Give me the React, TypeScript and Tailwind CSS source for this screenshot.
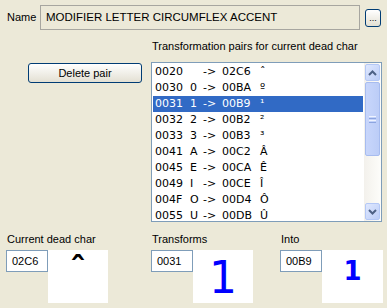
import React from "react";

const rows: [string, string, string, string][] = [
  ["0020", "", "02C6", "ˆ"],
  ["0030", "0", "00BA", "º"],
  ["0031", "1", "00B9", "¹"],
  ["0032", "2", "00B2", "²"],
  ["0033", "3", "00B3", "³"],
  ["0041", "A", "00C2", "Â"],
  ["0045", "E", "00CA", "Ê"],
  ["0049", "I", "00CE", "Î"],
  ["004F", "O", "00D4", "Ô"],
  ["0055", "U", "00DB", "Û"],
];

const sans = { fontFamily: '"Liberation Sans", Arial, sans-serif' };

function Chevron({ up }: { up: boolean }) {
  return (
    <svg width="9" height="6" viewBox="0 0 9 6">
      <path
        d={up ? "M1 5 L4.5 1.5 L8 5" : "M1 1 L4.5 4.5 L8 1"}
        fill="none"
        stroke="#4d6185"
        strokeWidth="2"
      />
    </svg>
  );
}

function Field({ value, boxW, boxContent }: { value: string; boxW: string; boxContent: React.ReactNode }) {
  return (
    <div className="flex items-start">
      <div className="w-[42px] h-[22px] border border-[#7f9db9] bg-white flex items-center pl-[5px] text-[11px] text-black">
        {value}
      </div>
      <div className={`${boxW} h-[53px] bg-white flex justify-center`}>{boxContent}</div>
    </div>
  );
}

export default function App() {
  return (
    <div className="w-[387px] h-[308px] bg-[#ece9d8] overflow-hidden text-black" style={sans}>
      {/* Row 1 */}
      <div className="flex items-center pt-[5px]">
        <div className="pl-[7px] w-[40px] text-[11px]">Name</div>
        <div className="w-[320px] h-[25px] border border-[#a7a6a0] bg-[#ece9d8] flex items-center pl-[5px] text-[11.5px]">
          MODIFIER LETTER CIRCUMFLEX ACCENT
        </div>
        <div className="ml-[5px] w-[16px] h-[18px] border border-[#003c74] rounded-[3px] bg-linear-to-b from-white to-[#e3e0d3] flex items-end justify-center pb-[3px] text-[9px] leading-none">
          ...
        </div>
      </div>

      {/* Row 2 */}
      <div className="mt-[10px] pl-[152px] text-[11px] leading-[13px]">
        Transformation pairs for current dead char
      </div>

      {/* Row 3 */}
      <div className="flex mt-[9px]">
        <div className="ml-[28px] mt-[1px] w-[114px] h-[20px] border border-[#003c74] rounded-[3px] bg-linear-to-b from-white to-[#e3e0d3] flex items-center justify-center text-[11px]">
          Delete pair
        </div>
        <div className="ml-[9px] w-[231px] h-[160px] border border-[#7f9db9] bg-white flex">
          <div className="flex-1 p-[1px] overflow-hidden" style={{ fontFamily: '"DejaVu Sans", Verdana, sans-serif' }}>
            {rows.map((r, i) => (
              <div
                key={r[0]}
                className={`flex h-[16px] items-center pl-[2px] text-[11px] whitespace-pre ${
                  i === 2 ? "bg-[#316ac5] text-white" : "text-black"
                }`}
              >
                <span className="w-[35px]">{r[0]}</span>
                <span className="w-[13px]">{r[1]}</span>
                <span className="w-[19px]">-&gt;</span>
                <span className="w-[38px]">{r[2]}</span>
                <span>{r[3]}</span>
              </div>
            ))}
          </div>
          <div className="w-[17px] h-full flex flex-col bg-linear-to-r from-[#f3f1ec] to-[#fdfdfa]">
            <div className="h-[17px] mx-[1px] mt-[1px] border border-[#b4c8f6] rounded-[2px] bg-linear-to-br from-[#dfe8fe] to-[#bccdf7] flex items-center justify-center">
              <Chevron up />
            </div>
            <div className="h-[74px] mx-[1px] mt-[1px] border border-[#a7bcef] rounded-[2px] bg-linear-to-r from-[#c8d6fb] to-[#bccdf7] flex flex-col items-center justify-center gap-[1px]">
              <div className="w-[7px] h-[1px] bg-[#eef3fe]" />
              <div className="w-[7px] h-[1px] bg-[#8ca5e0]" />
              <div className="w-[7px] h-[1px] bg-[#eef3fe]" />
              <div className="w-[7px] h-[1px] bg-[#8ca5e0]" />
            </div>
            <div className="flex-1" />
            <div className="h-[17px] mx-[1px] mb-[1px] border border-[#b4c8f6] rounded-[2px] bg-linear-to-br from-[#dfe8fe] to-[#bccdf7] flex items-center justify-center">
              <Chevron up={false} />
            </div>
          </div>
        </div>
      </div>

      {/* Row 4 */}
      <div className="flex mt-[11px]">
        <div className="ml-[6px] flex flex-col">
          <div className="text-[11px] leading-[13px] pl-[1px]">Current dead char</div>
          <div className="mt-[4px]">
            <Field
              value="02C6"
              boxW="w-[60px]"
              boxContent={
                <span
                  className="text-[34px] font-bold leading-none pt-[2px]"
                  style={{ fontFamily: '"DejaVu Sans", sans-serif' }}
                >
                  ˆ
                </span>
              }
            />
          </div>
        </div>
        <div className="ml-[43px] flex flex-col">
          <div className="text-[11px] leading-[13px] pl-[1px]">Transforms</div>
          <div className="mt-[4px]">
            <Field
              value="0031"
              boxW="w-[60px]"
              boxContent={
                <span
                  className="text-[44px] leading-none text-[#0000ff] pt-[6px]"
                  style={{ fontFamily: '"DejaVu Sans", sans-serif' }}
                >
                  1
                </span>
              }
            />
          </div>
        </div>
        <div className="ml-[27px] flex flex-col">
          <div className="text-[11px] leading-[13px] pl-[1px]">Into</div>
          <div className="mt-[4px]">
            <Field
              value="00B9"
              boxW="w-[61px]"
              boxContent={
                <span
                  className="text-[26px] font-bold leading-none text-[#0000ff] pt-[8px]"
                  style={{ fontFamily: '"DejaVu Sans", sans-serif' }}
                >
                  1
                </span>
              }
            />
          </div>
        </div>
      </div>
    </div>
  );
}
